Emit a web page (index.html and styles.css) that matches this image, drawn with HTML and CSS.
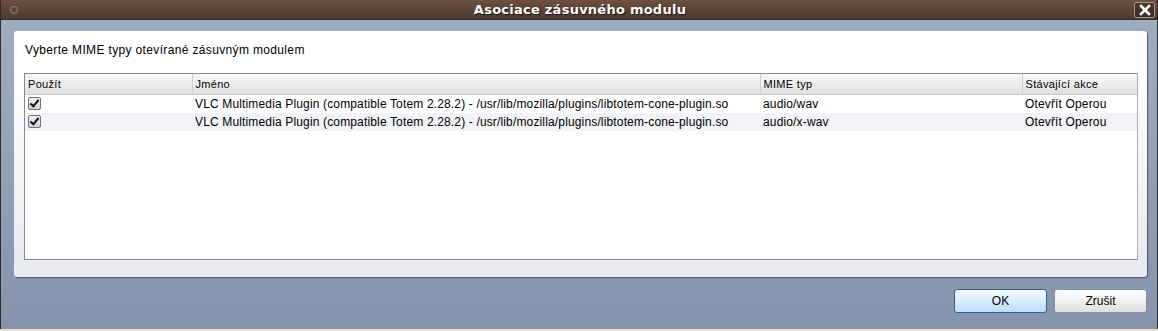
FILE: index.html
```html
<!DOCTYPE html>
<html lang="cs">
<head>
  <meta charset="UTF-8" />
  <title>Asociace zásuvného modulu</title>
  <link rel="stylesheet" href="styles.css">
</head>
<body>
  <div class="window">
    <div class="titlebar">
      <span class="menu-dot"></span>
      <span class="title">Asociace zásuvného modulu</span>
      <button type="button" class="close-btn">
        <svg width="12" height="12" viewBox="0 0 12 12">
          <path d="M2 2 L10 10 M10 2 L2 10" stroke="#fff" stroke-width="2.6" stroke-linecap="square"/>
        </svg>
      </button>
    </div>
    <div class="content">
      <div class="panel">
        <div class="hint">Vyberte MIME typy otevírané zásuvným modulem</div>
        <div class="list">
          <table>
            <colgroup>
              <col class="c-use">
              <col class="c-name">
              <col class="c-mime">
              <col class="c-action">
            </colgroup>
            <thead>
              <tr>
                <th>Použít</th>
                <th>Jméno</th>
                <th>MIME typ</th>
                <th>Stávající akce</th>
              </tr>
            </thead>
            <tbody>
              <tr>
                <td><span class="check"></span></td>
                <td>VLC Multimedia Plugin (compatible Totem 2.28.2) - /usr/lib/mozilla/plugins/libtotem-cone-plugin.so</td>
                <td>audio/wav</td>
                <td>Otevřít Operou</td>
              </tr>
              <tr class="alt">
                <td><span class="check"></span></td>
                <td>VLC Multimedia Plugin (compatible Totem 2.28.2) - /usr/lib/mozilla/plugins/libtotem-cone-plugin.so</td>
                <td>audio/x-wav</td>
                <td>Otevřít Operou</td>
              </tr>
            </tbody>
          </table>
        </div>
      </div>
      <div class="buttons">
        <button type="button" class="btn btn-default">OK</button>
        <button type="button" class="btn">Zrušit</button>
      </div>
    </div>
  </div>
</body>
</html>
```

FILE: styles.css
```css
html, body {
  margin: 0;
  padding: 0;
}
body {
  width: 1158px;
  height: 331px;
  overflow: hidden;
  background: #e6dccb;
  font-family: "Liberation Sans", Arial, sans-serif;
  font-size: 11px;
  color: #000;
}
.window {
  height: 329px;
  display: flex;
  flex-direction: column;
  border-left: 1px solid #2e2b2a;
  border-right: 1px solid #2e2b2a;
  background: linear-gradient(#a0aec1, #8594ac);
}
.titlebar {
  height: 20px;
  box-sizing: border-box;
  display: flex;
  align-items: center;
  padding: 0 2px 0 9px;
  background: linear-gradient(#6e5041, #5a4337 55%, #4c3a30);
  border-bottom: 1px solid #35281f;
}
.menu-dot {
  width: 6px;
  height: 6px;
  border-radius: 50%;
  border: 1px solid #9a8a80;
  background: #5d463a;
}
.title {
  flex: 1;
  text-align: center;
  font-family: "DejaVu Sans", sans-serif;
  font-weight: bold;
  font-size: 13px;
  letter-spacing: 0.25px;
  color: #fff;
  text-shadow: 1px 1px 1px #1e140f;
  padding-left: 8px;
}
.close-btn {
  width: 21px;
  height: 16px;
  padding: 0;
  margin-top: 1px;
  border: 1px solid #a8968b;
  border-radius: 2px;
  background: linear-gradient(#4a372d, #3a2b23);
  display: flex;
  align-items: center;
  justify-content: center;
}
.content {
  flex: 1;
  padding: 11px 10px 0 13px;
  display: flex;
  flex-direction: column;
}
.panel {
  height: 246px;
  box-sizing: border-box;
  background: linear-gradient(#ffffff 15%, #e8ebf0 92%);
  border-radius: 3px;
  box-shadow: 1px 1px 1px #4b5566;
  padding: 12px 9px 0 11px;
}
.hint {
  font-size: 12px;
  letter-spacing: 0.35px;
  height: 17px;
  margin-bottom: 13px;
}
.list {
  height: 185px;
  background: #fff;
  border: 1px solid #8a8a8a;
  border-right-color: #b0b0b0;
  overflow: hidden;
  margin-left: -1px;
}
table {
  border-collapse: collapse;
  table-layout: fixed;
  width: 1112px;
}
.c-use { width: 167px; }
.c-name { width: 568px; }
.c-mime { width: 262px; }
.c-action { width: 115px; }
th {
  height: 20px;
  padding: 0 0 0 3px;
  text-align: left;
  font-weight: normal;
  letter-spacing: 0.3px;
  background: linear-gradient(#f6f6f6, #eaeaea 60%, #dedede);
  border-left: 1px solid #d0d0d0;
  border-bottom: 1px solid #c8c8c8;
  box-sizing: border-box;
}
th:first-child {
  border-left: none;
}
td {
  height: 18px;
  padding: 0 0 0 3px;
  font-size: 12px;
  letter-spacing: 0.15px;
  white-space: nowrap;
  overflow: hidden;
}
tr.alt td {
  background: #f1f3f6;
}
.check {
  display: block;
  width: 11px;
  height: 11px;
  border: 1px solid #6f7176;
  border-radius: 2px;
  background: linear-gradient(#f2f2f2, #cfd1d5);
  position: relative;
}
.check::after {
  content: "";
  position: absolute;
  left: 3px;
  top: 0;
  width: 3px;
  height: 7px;
  border: solid #111;
  border-width: 0 2px 2px 0;
  transform: rotate(40deg);
}
.buttons {
  display: flex;
  justify-content: flex-end;
  gap: 7px;
  padding-top: 12px;
}
.btn {
  width: 93px;
  height: 24px;
  border: 1px solid #8c8f94;
  border-radius: 3px;
  background: linear-gradient(#ffffff, #f0f0f0 50%, #dedede);
  font-family: "Liberation Sans", Arial, sans-serif;
  font-size: 12px;
  color: #000;
  padding: 0;
}
.btn-default {
  border-color: #3c5a86;
  background: linear-gradient(#f3f9ff, #d9ecfc 50%, #b9dcf8);
}
```
